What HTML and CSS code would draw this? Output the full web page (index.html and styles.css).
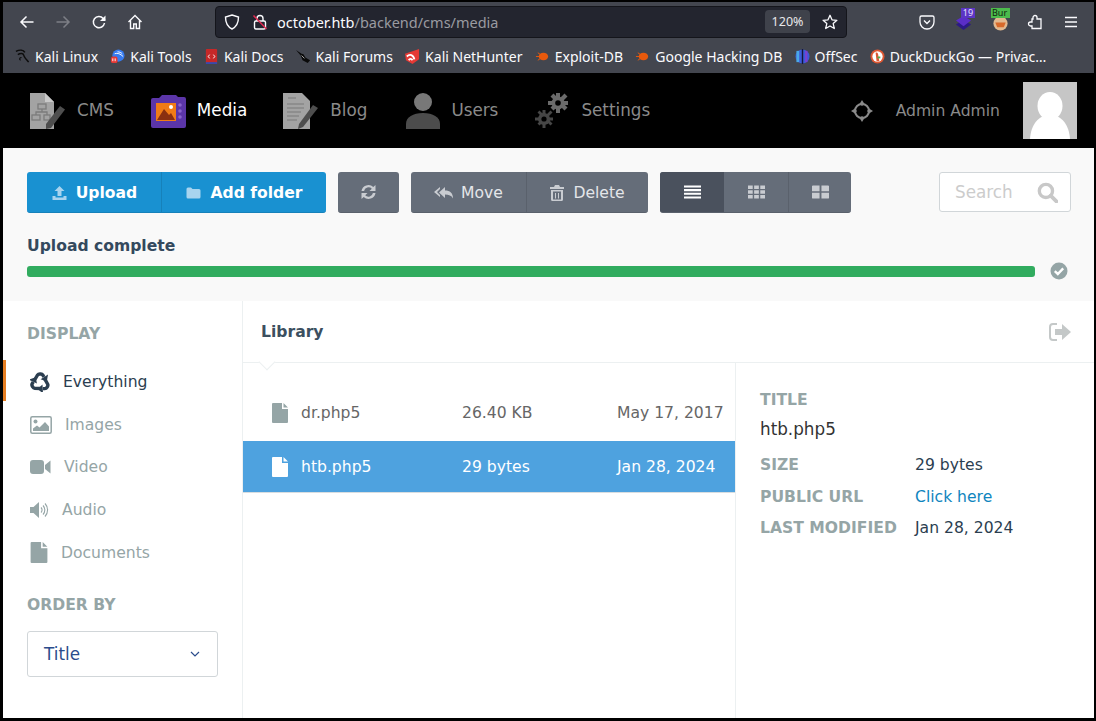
FILE: index.html
```html
<!DOCTYPE html>
<html lang="en">
<head>
    <meta charset="UTF-8">
    <meta name="viewport" content="width=device-width, initial-scale=1.0">
    <title>Media | October CMS</title>
    <link rel="stylesheet" href="styles.css">
</head>
<body>
<div class="window">
    <!-- Browser chrome -->
    <div class="browser-bar">
        <div class="nav-btns">
            <svg class="chrome-icon" viewBox="0 0 16 16"><path d="M14.5 8H2M7.5 2.500 2 8l5.500 5.500" fill="none" stroke="#fbfbfe" stroke-width="1.500"/></svg>
            <svg class="chrome-icon" viewBox="0 0 16 16"><path d="M1.500 8H14M8.500 2.500 14 8l-5.500 5.500" fill="none" stroke="#7d7f86" stroke-width="1.500"/></svg>
            <svg class="chrome-icon" viewBox="0 0 16 16"><path d="M13.500 9a5.600 5.600 0 1 1-1.300-4.600L14 6" fill="none" stroke="#fbfbfe" stroke-width="1.500"/><path d="M14.500 1.500V7H9z" fill="#fbfbfe"/></svg>
            <svg class="chrome-icon" viewBox="0 0 16 16"><path d="M1.500 8 8 1.500 14.500 8M3.500 6.500v8h3.200v-4.500h2.600v4.500h3.200v-8" fill="none" stroke="#fbfbfe" stroke-width="1.400"/></svg>
        </div>
        <div class="url-bar">
            <svg class="url-shield" viewBox="0 0 16 16"><path d="M8 1 14.500 3c0 6-1.500 9.500-6.500 12C3 12.500 1.500 9 1.500 3z" fill="none" stroke="#fbfbfe" stroke-width="1.400"/></svg>
            <svg class="url-lock" viewBox="0 0 16 16"><path d="M5 7V4.500a3 3 0 0 1 6 0V7" fill="none" stroke="#fbfbfe" stroke-width="1.400"/><rect x="2.500" y="7" width="11" height="8" rx="1.500" fill="none" stroke="#fbfbfe" stroke-width="1.400"/><path d="M1.500 1.500 14.500 15" stroke="#e22850" stroke-width="1.500"/></svg>
            <span class="url-text">october.htb<span class="url-dim">/backend/cms/media</span></span>
            <span class="zoom-badge">120%</span>
            <svg class="url-star" viewBox="0 0 16 16"><path d="M8 1.300 10 5.800l4.900.5-3.700 3.300 1.100 4.900L8 12l-4.300 2.500 1.100-4.900L1.100 6.300 6 5.800z" fill="none" stroke="#fbfbfe" stroke-width="1.300" stroke-linejoin="round"/></svg>
        </div>
        <div class="ext-icons">
            <svg class="chrome-icon" viewBox="0 0 16 16"><path d="M2.500 2h11A1.500 1.500 0 0 1 15 3.500V8A7 7 0 0 1 1 8V3.500A1.500 1.500 0 0 1 2.500 2z" fill="none" stroke="#fbfbfe" stroke-width="1.300"/><path d="M5 6.500 8 9.500l3-3" fill="none" stroke="#fbfbfe" stroke-width="1.400"/></svg>
            <span class="ext-badged">
                <svg class="ext-stack" viewBox="0 0 18 18"><path d="M9 6 17 11 9 17 1 11z" fill="#2c1a86"/><path d="M9 2 17 7 9 13 1 7z" fill="#5a2ec8"/></svg>
                <span class="ext-count">19</span>
            </span>
            <span class="ext-badged ext-badged-burp">
                <svg class="ext-stack" viewBox="0 0 18 18"><circle cx="9" cy="10" r="7.500" fill="#e3b98f"/><path d="M3.500 9h11l-2 5H5.500z" fill="#d8692a"/></svg>
                <span class="ext-burp">Bur</span>
            </span>
            <svg class="chrome-icon" viewBox="0 0 16 16"><path d="M6 3.500a2 2 0 0 1 4 0V5h4v9.500H5V12H3.500a2 2 0 0 1 0-4H5V5h1z" fill="none" stroke="#fbfbfe" stroke-width="1.300"/></svg>
            <svg class="chrome-icon" viewBox="0 0 16 16"><path d="M2 3.500h12M2 8h12M2 12.500h12" stroke="#fbfbfe" stroke-width="1.300"/></svg>
        </div>
    </div>
    <div class="bookmarks">
        <span class="bookmark"><svg class="fav" viewBox="0 0 16 16"><path d="M1 2.500C5 .5 9 1 10.500 3.500M3 6c3-2 6-1.500 6.500 1 .5 2 2 3.500 5 7" fill="none" stroke="#0d0d0d" stroke-width="1.600"/><path d="M7 9c-2 0-3 2-1 3" fill="none" stroke="#0d0d0d" stroke-width="1.200"/></svg>Kali Linux</span>
        <span class="bookmark"><svg class="fav" viewBox="0 0 16 16"><circle cx="9" cy="7" r="6.500" fill="#367bf0"/><path d="M5 5c3-1 6 0 9 3M8 3c2 0 4 1 5 2" stroke="#fff" fill="none"/><rect x="1" y="8" width="7" height="7" rx="2" fill="#e53935"/><path d="M3 10v3M5.500 10v3" stroke="#fff"/></svg>Kali Tools</span>
        <span class="bookmark"><svg class="fav" viewBox="0 0 16 16"><rect x="2" y="0" width="12" height="16" rx="1" fill="#c62828"/><rect x="2" y="14" width="12" height="2" fill="#3949ab"/><path d="M6 6 4.500 8 6 10M10 6l1.500 2L10 10" stroke="#fff" fill="none"/></svg>Kali Docs</span>
        <span class="bookmark"><svg class="fav" viewBox="0 0 16 16"><path d="M0 1 6 5l2 .5 2 3.500 5 3-2.500 3L7 12 5 7z" fill="#0a0a0a"/><path d="M6 7l3 3" stroke="#ddd" stroke-width=".8"/></svg>Kali Forums</span>
        <span class="bookmark"><svg class="fav" viewBox="0 0 16 16"><path d="M0 5 15 0v11L8 16 1 12z" fill="#e53935"/><path d="M2 8c3-3 7-2 8 3M4 12c1-2 3-2 4 0" stroke="#fff" stroke-width="2" fill="none"/></svg>Kali NetHunter</span>
        <span class="bookmark"><svg class="fav" viewBox="0 0 16 16"><ellipse cx="9" cy="8" rx="5" ry="4" fill="#e8590c"/><path d="M1 8h4M3 4l3 2M3 12l3-2" stroke="#e8590c"/></svg>Exploit-DB</span>
        <span class="bookmark"><svg class="fav" viewBox="0 0 16 16"><ellipse cx="9" cy="8" rx="5" ry="4" fill="#e8590c"/><path d="M1 8h4M3 4l3 2M3 12l3-2" stroke="#e8590c"/></svg>Google Hacking DB</span>
        <span class="bookmark"><svg class="fav" viewBox="0 0 16 16"><circle cx="8" cy="8" r="7.500" fill="#3b5bd9"/><path d="M3 2v12" stroke="#4aa8e8" stroke-width="3"/><path d="M8 0v16" stroke="#15173a" stroke-width="1.500"/><path d="M12 2v12" stroke="#7b3fd1" stroke-width="2.500"/></svg>OffSec</span>
        <span class="bookmark"><svg class="fav" viewBox="0 0 16 16"><circle cx="8" cy="8" r="7.500" fill="#de5833"/><circle cx="8" cy="8" r="5.500" fill="#fff"/><path d="M6 4c2-1 3 1 3 4l1 5H7z" fill="#de5833"/><path d="M8 9h3" stroke="#4caf50" stroke-width="2"/></svg>DuckDuckGo — Privac…</span>
    </div>

    <!-- Backend nav -->
    <nav class="main-nav">
        <a class="nav-item nav-cms">
            <svg class="nav-icon" viewBox="0 0 36 36"><path d="M1 0h15l9 9v27H1z" fill="#a3a3a3"/><path d="M16 0v9h9z" fill="#c9c9c9"/><g fill="none" stroke="#7b7b7b" stroke-width="1.300"><rect x="9" y="11" width="8" height="5"/><rect x="3" y="22" width="8" height="5"/><rect x="15" y="22" width="6" height="5"/><path d="M13 16v3H7v3M13 19h5v3"/></g><path d="M17 31 31 13l5 3.500L22 35l-5 1z" fill="#4e4e4e"/></svg>
            <span>CMS</span>
        </a>
        <a class="nav-item nav-media active">
            <svg class="nav-icon" viewBox="0 0 36 34"><path d="M1 6q0-2 2-2h6l3-3h14l2 2h6q2 0 2 2v27q0 2-2 2H3q-2 0-2-2z" fill="#5b35a8"/><rect x="6" y="9" width="20" height="18" fill="#f07b16"/><path d="M7 26 14 15l5 6 2-2 4 7z" fill="#8a2f10"/><circle cx="21" cy="13" r="2" fill="#fff"/><circle cx="30" cy="11" r="1.800" fill="#8a64cc"/><circle cx="30" cy="17" r="1.800" fill="#8a64cc"/><circle cx="30" cy="23" r="1.800" fill="#8a64cc"/></svg>
            <span>Media</span>
        </a>
        <a class="nav-item nav-blog">
            <svg class="nav-icon" viewBox="0 0 36 36"><path d="M0 0h19l8 8v28H0z" fill="#a3a3a3"/><path d="M5 5h8M4 11h17M4 15h17M4 19h14M4 23h12M4 27h10" stroke="#7b7b7b" stroke-width="1.200"/><path d="M16 31 30 12l5 3-15 19-5 2z" fill="#4e4e4e"/></svg>
            <span>Blog</span>
        </a>
        <a class="nav-item nav-users">
            <svg class="nav-icon" viewBox="0 0 36 36"><circle cx="18" cy="9" r="9" fill="#787878"/><path d="M1 36v-5c0-7 7-11 17-11s17 4 17 11v5z" fill="#4c4c4c"/></svg>
            <span>Users</span>
        </a>
        <a class="nav-item nav-settings">
            <svg class="nav-icon" viewBox="0 0 36 36"><g fill="#6a6a6a"><circle cx="24" cy="10" r="6.500"/><path d="M22 0h4v20h-4zM14 8h20v4H14zM16.500 3.500l3-3 14 14-3 3zM30.500.5l3 3-14 14-3-3z"/></g><circle cx="24" cy="10" r="2.800" fill="#000"/><g fill="#464646"><circle cx="10" cy="26" r="6"/><path d="M8.500 17h3v18h-3zM1 24.500h18v3H1zM3.500 19.500l2-2 13 13-2 2zM16.500 17.500l2 2-13 13-2-2z"/></g><circle cx="10" cy="26" r="2.600" fill="#000"/></svg>
            <span>Settings</span>
        </a>
        <div class="nav-right">
            <svg class="nav-target" viewBox="0 0 22 22"><circle cx="11" cy="11" r="7" fill="none" stroke="#8a8a8a" stroke-width="2"/><path d="M11 0l2.500 4-2.500 2-2.500-2zM11 22l2.500-4-2.500-2-2.500 2zM0 11l4-2.500 2 2.500-2 2.500zM22 11l-4-2.500-2 2.500 2 2.500z" fill="#8a8a8a"/></svg>
            <span class="nav-user">Admin Admin</span>
            <div class="avatar">
                <svg viewBox="0 0 54 57"><rect width="54" height="57" fill="#c6c6c6"/><ellipse cx="27" cy="24" rx="12.500" ry="14" fill="#fff"/><path d="M7 57c1-14 8-24 20-24s19 10 20 24z" fill="#fff"/></svg>
            </div>
        </div>
    </nav>

    <!-- Toolbar and upload progress -->
    <section class="toolbar-area">
        <div class="toolbar">
            <div class="btn-group btn-blue">
                <button class="btn btn-upload">
                    <svg class="btn-icon" viewBox="0 0 16 16"><path d="M8 1 13 6H10v5H6V6H3z" fill="#a8d4ef"/><path d="M1 11h3v1.500h8V11h3v4H1z" fill="#a8d4ef"/></svg>
                    Upload
                </button>
                <button class="btn btn-folder">
                    <svg class="btn-icon" viewBox="0 0 16 16"><path d="M1 4q0-1.500 1.500-1.500h3L7 4h6.500Q15 4 15 5.500V12q0 1.500-1.500 1.500h-11Q1 13.500 1 12z" fill="#a8d4ef"/></svg>
                    Add folder
                </button>
            </div>
            <div class="btn-group btn-gray btn-refresh">
                <button class="btn">
                    <svg class="btn-icon" viewBox="0 0 16 16"><path d="M1 7a7 7 0 0 1 11.800-4L15 1v6H9l2.300-2.300A4.500 4.500 0 0 0 3.600 7zM15 9a7 7 0 0 1-11.800 4L1 15V9h6l-2.300 2.300A4.500 4.500 0 0 0 12.400 9z" fill="#c9ccd1"/></svg>
                </button>
            </div>
            <div class="btn-group btn-gray btn-actions">
                <button class="btn btn-move">
                    <svg class="btn-icon btn-icon-wide" viewBox="0 0 20 16"><path d="M6 2v2L3 7l3 3v2L0 7z" fill="#c9ccd1"/><path d="M11 2v3.500c5 0 8 2.500 8 8-1.500-3-4-4-8-4V13L5 7.500z" fill="#c9ccd1"/></svg>
                    Move
                </button>
                <button class="btn btn-delete">
                    <svg class="btn-icon btn-icon-small" viewBox="0 0 14 16"><path d="M5 0h4l1 2h4v2H0V2h4zM1 5h12v9.500q0 1.500-1.500 1.500h-9Q1 16 1 14.500zm2 1.500v8h8v-8zM5 8h1v5.500H5zm3 0h1v5.500H8z" fill="#c9ccd1" fill-rule="evenodd"/></svg>
                    Delete
                </button>
            </div>
            <div class="btn-group btn-gray btn-views">
                <button class="btn btn-view btn-view-list">
                    <svg class="btn-icon" viewBox="0 0 18 14"><path d="M0 0h18v2.200H0zM0 3.900h18v2.200H0zM0 7.800h18V10H0zM0 11.700h18V14H0z" fill="#fff"/></svg>
                </button>
                <button class="btn btn-view btn-view-grid">
                    <svg class="btn-icon" viewBox="0 0 18 14"><path d="M0 0h5v3.800H0zM6.500 0h5v3.800h-5zM13 0h5v3.800h-5zM0 5.100h5v3.800H0zM6.500 5.100h5v3.800h-5zM13 5.100h5v3.800h-5zM0 10.200h5V14H0zM6.500 10.200h5V14h-5zM13 10.200h5V14h-5z" fill="#c9ccd1"/></svg>
                </button>
                <button class="btn btn-view btn-view-tiles">
                    <svg class="btn-icon" viewBox="0 0 18 14"><path d="M0 1q0-1 1-1h7v6.300H0zM10 0h7q1 0 1 1v5.300h-8zM0 7.700h8V14H1q-1 0-1-1zM10 7.700h8V13q0 1-1 1h-7z" fill="#c9ccd1"/></svg>
                </button>
            </div>
            <div class="search-box">
                <span class="search-text">Search</span>
                <svg class="search-icon" viewBox="0 0 20 20"><circle cx="8.500" cy="8.500" r="6.300" fill="none" stroke="#c8c8c8" stroke-width="3.200"/><path d="M13 13l5.500 5.500" stroke="#c8c8c8" stroke-width="3.600" stroke-linecap="round"/></svg>
            </div>
        </div>
        <div class="upload-label">Upload complete</div>
        <div class="upload-row">
            <div class="progress-bar"></div>
            <svg class="upload-check" viewBox="0 0 18 18"><circle cx="9" cy="9" r="8.500" fill="#95a5a6"/><path d="M4.800 9.200 7.800 12l5.400-5.600" fill="none" stroke="#fff" stroke-width="2.400"/></svg>
        </div>
    </section>

    <div class="media-main">
        <!-- Sidebar -->
        <aside class="sidebar">
            <h4 class="side-title">DISPLAY</h4>
            <ul class="side-list">
                <li class="side-item active">
                    <svg class="side-icon" viewBox="0 0 20 20"><g id="recycle-arm"><path d="M4.600 8 7.600 3Q8.300 2 9.800 2H10.800Q12.200 2 12.900 3.200L13.900 5" fill="none" stroke="#2b3e50" stroke-width="3.400"/><path d="M18 2.400 16.800 9.400 10.600 7.300z" fill="#2b3e50"/></g><use href="#recycle-arm" transform="rotate(120 10 10.500)"/><use href="#recycle-arm" transform="rotate(240 10 10.500)"/></svg>
                    Everything
                </li>
                <li class="side-item item-images">
                    <svg class="side-icon side-icon-wide" viewBox="0 0 22 18"><rect x=".8" y=".8" width="20.400" height="16.400" rx="1.500" fill="none" stroke="#95a5a6" stroke-width="1.500"/><circle cx="5.500" cy="5.500" r="2" fill="#95a5a6"/><path d="M3 15v-2.500l4-3 2.500 2L15 6l4 4.500V15z" fill="#95a5a6"/></svg>
                    Images
                </li>
                <li class="side-item item-video">
                    <svg class="side-icon side-icon-wide" viewBox="0 0 21 16"><rect x="0" y="1" width="14" height="14" rx="3" fill="#95a5a6"/><path d="M15 6 20.500 1.500v13L15 10z" fill="#95a5a6"/></svg>
                    Video
                </li>
                <li class="side-item item-audio">
                    <svg class="side-icon side-icon-audio" viewBox="0 0 20 16"><path d="M0 5h3.500L9 0v16l-5.500-5H0z" fill="#95a5a6"/><path d="M11 5.500a3.500 3.500 0 0 1 0 5M13 3.500a6.500 6.500 0 0 1 0 9M15 1.500a9.500 9.500 0 0 1 0 13" fill="none" stroke="#95a5a6" stroke-width="1.100"/></svg>
                    Audio
                </li>
                <li class="side-item item-docs">
                    <svg class="side-icon side-icon-doc" viewBox="0 0 16 20"><path d="M1 0h9v6h6v13q0 1-1 1H1q-1 0-1-1V1q0-1 1-1zM11.500 0 16 4.500h-4.500z" fill="#95a5a6"/></svg>
                    Documents
                </li>
            </ul>
            <h4 class="side-title side-title-order">ORDER BY</h4>
            <div class="order-select">
                <span>Title</span>
                <svg class="order-arrow" viewBox="0 0 10 6"><path d="M1 1l4 4 4-4" fill="none" stroke="#2b4c8c" stroke-width="1.200"/></svg>
            </div>
        </aside>

        <main class="library">
            <div class="library-head">
                <h3 class="library-title">Library</h3>
                <svg class="library-toggle" viewBox="0 0 22 18"><path d="M8 1H4Q1 1 1 4v10q0 3 3 3h4" fill="none" stroke="#c4c8c8" stroke-width="2"/><path d="M6 6h7V1l9 8-9 8v-5H6z" fill="#c4c8c8"/></svg>
            </div>
            <div class="library-body">
                <div class="file-list">
                    <div class="file-row">
                        <svg class="file-icon" viewBox="0 0 16 20"><path d="M1 0h9v6h6v13q0 1-1 1H1q-1 0-1-1V1q0-1 1-1zM11.500 0 16 4.500h-4.500z" fill="#95a5a6"/></svg>
                        <span class="file-name">dr.php5</span>
                        <span class="file-size">26.40 KB</span>
                        <span class="file-date">May 17, 2017</span>
                    </div>
                    <div class="file-row selected">
                        <svg class="file-icon" viewBox="0 0 16 20"><path d="M1 0h9v6h6v13q0 1-1 1H1q-1 0-1-1V1q0-1 1-1zM11.500 0 16 4.500h-4.500z" fill="#fff"/></svg>
                        <span class="file-name">htb.php5</span>
                        <span class="file-size">29 bytes</span>
                        <span class="file-date">Jan 28, 2024</span>
                    </div>
                </div>
                <div class="details">
                    <div class="detail-label">TITLE</div>
                    <div class="detail-title">htb.php5</div>
                    <dl class="detail-grid">
                        <dt>SIZE</dt>
                        <dd>29 bytes</dd>
                        <dt>PUBLIC URL</dt>
                        <dd><a class="detail-link">Click here</a></dd>
                        <dt>LAST MODIFIED</dt>
                        <dd>Jan 28, 2024</dd>
                    </dl>
                </div>
            </div>
        </main>
    </div>
</div>
</body>
</html>
```

FILE: styles.css
```css
* {
    box-sizing: border-box;
}
html, body {
    margin: 0;
    height: 100%;
    overflow: hidden;
}
body {
    background: #000;
    font-family: "DejaVu Sans", sans-serif;
}
.window {
    height: 721px;
    padding: 2px 2px 3px 3px;
    display: flex;
    flex-direction: column;
}

/* browser chrome */
.browser-bar {
    height: 39px;
    background: #43464f;
    display: flex;
    align-items: center;
    position: relative;
}
.nav-btns {
    display: flex;
    gap: 20px;
    width: 212px;
    padding-left: 16px;
}
.chrome-icon {
    width: 16px;
    height: 16px;
}
.url-bar {
    width: 632px;
    height: 32px;
    background: #23252f;
    border: 1px solid #14151b;
    border-radius: 4px;
    display: flex;
    align-items: center;
    padding: 0 7px;
}
.url-shield {
    width: 16px;
    height: 16px;
    margin-left: 1px;
}
.url-lock {
    width: 16px;
    height: 16px;
    margin-left: 12px;
}
.url-text {
    font-family: "Noto Sans", sans-serif;
    font-size: 14.500px;
    color: #fbfbfe;
    margin-left: 9px;
    flex: 1;
}
.url-dim {
    color: #9a9ba1;
}
.zoom-badge {
    font-family: "Noto Sans", sans-serif;
    font-size: 12.500px;
    color: #e8e8ea;
    background: #3f424b;
    border-radius: 4px;
    padding: 3px 6px;
    height: 23px;
    width: 45px;
    text-align: center;
}
.url-star {
    width: 16px;
    height: 16px;
    margin-left: 12px;
    margin-right: 1px;
}
.ext-icons {
    display: flex;
    align-items: center;
    gap: 20px;
    margin-left: 72px;
}
.ext-badged {
    position: relative;
    width: 17px;
    height: 17px;
    margin-top: 2px;
}
.ext-badged-burp {
    margin-right: -2px;
}
.ext-stack {
    width: 17px;
    height: 17px;
    display: block;
}
.ext-count {
    position: absolute;
    left: 6px;
    top: -6px;
    width: 14px;
    height: 10px;
    background: #5b35c4;
    color: #e8e0ff;
    font-family: "Noto Sans", sans-serif;
    font-size: 9px;
    line-height: 10px;
    text-align: center;
}
.ext-burp {
    position: absolute;
    left: -1px;
    top: -6px;
    width: 19px;
    height: 10px;
    padding-left: 1px;
    background: #4cbb4c;
    color: #10240f;
    font-family: "Noto Sans", sans-serif;
    font-size: 9px;
    line-height: 10px;
}
.bookmarks {
    height: 32px;
    background: #43464f;
    display: flex;
    align-items: center;
    gap: 12.200px;
    padding: 0 0 2px 12px;
    color: #fbfbfe;
    font-family: "Noto Sans", sans-serif;
    font-size: 14px;
    white-space: nowrap;
}
.bookmark {
    display: flex;
    align-items: center;
    gap: 5px;
}
.fav {
    width: 15px;
    height: 15px;
}

/* backend nav */
.main-nav {
    height: 75px;
    background: #000;
    display: flex;
    align-items: center;
    color: #8a8a8a;
    font-size: 16.800px;
}
.nav-item {
    display: flex;
    align-items: center;
    gap: 12px;
}
.nav-item span {
    padding-bottom: 2px;
}
.nav-item.active {
    color: #fff;
}
.nav-icon {
    width: 36px;
    height: 36px;
    flex: none;
}
.nav-cms {
    margin-left: 26px;
}
.nav-media {
    margin-left: 36px;
    gap: 11px;
}
.nav-blog {
    margin-left: 36px;
    gap: 11px;
}
.nav-users {
    margin-left: 38px;
    gap: 10px;
}
.nav-settings {
    margin-left: 36px;
    gap: 11px;
}
.nav-right {
    margin-left: auto;
    display: flex;
    align-items: center;
    padding-right: 17px;
}
.nav-target {
    width: 22px;
    height: 22px;
}
.nav-user {
    margin-left: 23px;
    font-size: 15.600px;
}
.avatar {
    width: 54px;
    height: 57px;
    margin-left: 23px;
}
.avatar svg {
    display: block;
}

/* toolbar */
.toolbar-area {
    height: 153px;
    background: #f9f9f9;
    padding: 24px 23px 0 24px;
}
.toolbar {
    display: flex;
    align-items: flex-start;
}
.btn-group {
    display: flex;
    height: 41px;
    border-radius: 3px;
    overflow: hidden;
}
.btn {
    border: none;
    padding: 0;
    height: 100%;
    display: flex;
    align-items: center;
    justify-content: center;
    font-family: inherit;
    font-size: 15.600px;
    color: #fff;
    background: transparent;
}
.btn-blue .btn,
.btn-actions .btn {
    padding-top: 2px;
}
.btn-blue {
    width: 299px;
    background: #1991d1;
    border-bottom: 1px solid #1681ba;
}
.btn-blue .btn {
    font-weight: 700;
}
.btn-upload {
    width: 135px;
    border-right: 1px solid #1681ba;
}
.btn-folder {
    flex: 1;
}
.btn-gray {
    background: #656d79;
    border-bottom: 1px solid #5a616c;
}
.btn-refresh {
    width: 61px;
    margin-left: 12px;
}
.btn-refresh .btn {
    width: 100%;
}
.btn-actions {
    width: 237px;
    margin-left: 12px;
}
.btn-move {
    width: 116px;
    border-right: 1px solid #5a616c;
    color: #e4e6e9;
}
.btn-delete {
    flex: 1;
    color: #e4e6e9;
}
.btn-views {
    width: 191px;
    margin-left: 12px;
}
.btn-view {
    width: 64px;
}
.btn-view-list {
    width: 64px;
    background: #4a515d;
}
.btn-view-grid {
    width: 65px;
    border-right: 1px solid #5a616c;
}
.btn-view-tiles {
    flex: 1;
}
.btn-icon {
    width: 17px;
    height: 16px;
    margin-right: 8px;
}
.btn-refresh .btn-icon,
.btn-view .btn-icon {
    margin-right: 0;
}
.btn-icon-wide {
    width: 20px;
    margin-right: 7px;
}
.btn-icon-small {
    width: 14px;
    margin-right: 9px;
}
.search-box {
    width: 132px;
    height: 40px;
    margin-left: auto;
    background: #fff;
    border: 1px solid #d1d6d9;
    border-radius: 3px;
    display: flex;
    align-items: center;
    padding: 0 12px 0 15px;
}
.search-text {
    flex: 1;
    font-size: 16.800px;
    color: #cccccc;
}
.search-icon {
    width: 21px;
    height: 21px;
}
.upload-label {
    margin-top: 23px;
    font-size: 15.600px;
    font-weight: 700;
    line-height: 20px;
    color: #34495e;
}
.upload-row {
    display: flex;
    align-items: center;
    margin-top: 6px;
}
.progress-bar {
    width: 1008px;
    height: 11px;
    background: #31ac5f;
    border-radius: 3px;
}
.upload-check {
    width: 18px;
    height: 18px;
    margin-left: 15px;
}

/* main area */
.media-main {
    flex: 1;
    display: flex;
    background: #fff;
    min-height: 0;
}
.sidebar {
    width: 240px;
    border-right: 1px solid #ecf0f1;
    padding-top: 23px;
}
.side-title {
    margin: 0;
    padding-left: 24px;
    font-size: 15.600px;
    line-height: 20px;
    font-weight: 700;
    color: #95a5a6;
}
.side-list {
    list-style: none;
    margin: 16px 0 0;
    padding: 0;
}
.side-item {
    height: 42.500px;
    display: flex;
    align-items: center;
    font-size: 15.600px;
    color: #95a5a6;
    padding: 2px 0 0 27px;
}
.side-item.active {
    color: #2b3e50;
    border-left: 3px solid #e67e22;
    padding-left: 24px;
    height: 41px;
    margin-bottom: 1.500px;
}
.side-item.item-docs {
    padding-top: 3px;
}
.side-icon {
    width: 20px;
    height: 20px;
    margin-right: 13px;
}
.side-icon-wide {
    width: 22px;
    height: 18px;
    margin-right: 13px;
}
.item-video .side-icon {
    width: 21px;
    margin-right: 13px;
}
.side-icon-audio {
    width: 20px;
    height: 16px;
    margin-right: 12px;
}
.side-icon-doc {
    width: 18px;
    height: 21px;
    margin-right: 13px;
}
.side-title-order {
    margin-top: 22px;
}
.order-select {
    width: 191px;
    height: 46px;
    margin: 16.500px 0 0 24px;
    border: 1px solid #d1d6d9;
    border-radius: 3px;
    display: flex;
    align-items: center;
    justify-content: space-between;
    padding: 0 17px 0 16px;
    font-size: 16.800px;
    color: #2b4c8c;
}
.order-arrow {
    width: 10px;
    height: 6px;
}
.library {
    flex: 1;
    display: flex;
    flex-direction: column;
    min-width: 0;
}
.library-head {
    height: 62px;
    border-bottom: 1px solid #ecf0f1;
    display: flex;
    align-items: center;
    justify-content: space-between;
    padding: 0 23px 0 18px;
    position: relative;
}
.library-head::after {
    content: "";
    position: absolute;
    left: 18px;
    bottom: -6px;
    width: 11px;
    height: 11px;
    background: #fff;
    border-right: 1px solid #ecf0f1;
    border-bottom: 1px solid #ecf0f1;
    transform: rotate(45deg);
}
.library-title {
    margin: 0;
    font-size: 15.600px;
    font-weight: 700;
    color: #3c4f60;
}
.library-toggle {
    width: 22px;
    height: 18px;
}
.library-body {
    flex: 1;
    display: flex;
    min-height: 0;
}
.file-list {
    width: 493px;
    border-right: 1px solid #ecf0f1;
    padding-top: 27px;
}
.file-row {
    height: 51px;
    display: flex;
    align-items: center;
    font-size: 15.600px;
    color: #666;
    padding: 0 0 6px 29px;
}
.file-row.selected {
    height: 52px;
    background: #4ea2df;
    color: #fff;
    border-bottom: 1px solid #d8dde0;
    padding-bottom: 0;
}
.file-icon {
    width: 16px;
    height: 20px;
    margin-right: 13px;
    flex: none;
}
.file-name {
    width: 161px;
}
.file-size {
    width: 155px;
}
.details {
    flex: 1;
    padding: 27px 24px 0;
    color: #2b3e50;
}
.detail-label,
.detail-grid dt {
    font-size: 15.600px;
    font-weight: 700;
    color: #95a5a6;
}
.detail-label {
    line-height: 20px;
}
.detail-title {
    margin-top: 8px;
    font-size: 16.800px;
    line-height: 22px;
    color: #333;
}
.detail-grid {
    margin: 9.400px 0 0;
    display: grid;
    grid-template-columns: 155px 1fr;
    grid-auto-rows: 31.500px;
    align-items: center;
    font-size: 15.600px;
}
.detail-grid dd {
    margin: 0;
}
.detail-link {
    color: #0f85be;
}
```
